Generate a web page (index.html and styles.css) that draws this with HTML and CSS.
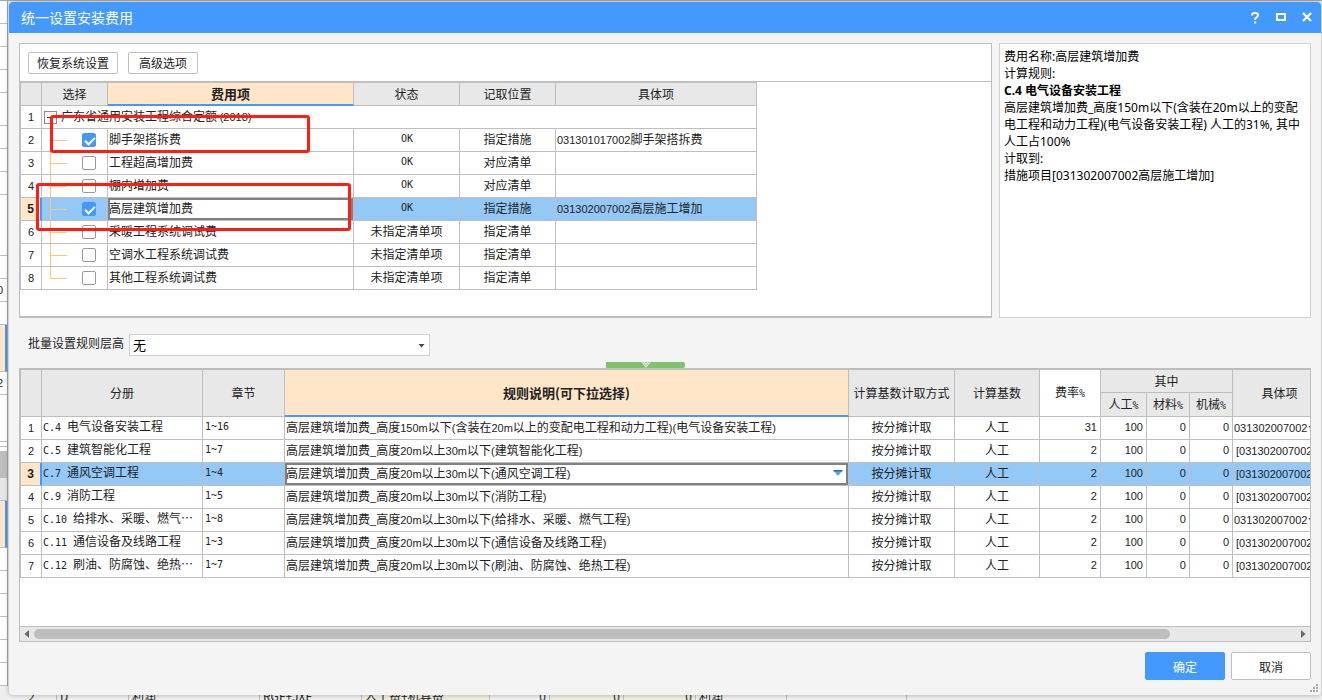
FILE: index.html
```html
<!DOCTYPE html>
<html lang="zh-CN">
<head>
<meta charset="utf-8">
<title>统一设置安装费用</title>
<link rel="stylesheet" href="styles.css">
</head>
<body>
<div class="backdrop" aria-hidden="true">
  <div class="rail">
    <i class="r24"></i><i class="r23"></i><i class="r23"></i><i class="r23"></i><i class="r33"></i><i class="r23"></i><i class="r23"></i><i class="r23"></i><i class="r61"></i><i class="r23"></i>
    <i class="r23">0</i><i class="r23">.</i><i class="r47 peach"></i><i class="r23">2</i><i class="r47"></i><i class="r5"></i><i class="r5"></i><i class="thumb"></i><i class="track"></i><i class="r47 peach"></i>
    <i class="r23"></i><i class="r23"></i><i class="r23"></i><i class="r23"></i><i class="r23"></i><i class="r23"></i>
  </div>
  <div class="under">
    <span class="u50 mid">2</span><span class="u72">D</span><span class="u131">利润</span><span class="u102">RGF+JXF</span><span class="u128 yellow">人工费+机具费</span><span class="u60 right">0</span><span class="u74 yellow right">0</span><span class="u72 yellow right">0</span><span class="u91">利润</span><span class="u120"></span>
  </div>
</div>

<main class="dialog">
  <header class="titlebar">
    <h1>统一设置安装费用</h1>
    <button type="button" aria-label="帮助"><svg width="10" height="12" viewBox="0 0 10 12"><path d="M2 3.600V2.800Q2 1 5 1t3 2.200q0 1.300-1.600 2.200Q5 6.200 5 8" fill="none" stroke="#fff" stroke-width="2"/><path d="M4 9.500h2.200v2H4z" fill="#fff"/></svg></button>
    <button type="button" aria-label="最大化"><svg width="10" height="12" viewBox="0 0 10 12"><path d="M1 2h8v6H1z" fill="none" stroke="#fff" stroke-width="2"/></svg></button>
    <button type="button" aria-label="关闭"><svg width="10" height="12" viewBox="0 0 10 12"><path d="M1 1l8 8M9 1l-8 8" stroke="#fff" stroke-width="2.200"/></svg></button>
  </header>

  <div class="content">
    <div class="upper">
      <section class="panel fees">
        <div class="toolbar">
          <button type="button" class="btn small wide">恢复系统设置</button>
          <button type="button" class="btn small">高级选项</button>
        </div>
        <div class="fee-wrap">
          <table class="grid fee-table">
            <colgroup><col class="w21"><col class="w66"><col class="w246"><col class="w106"><col class="w96"><col class="w201"></colgroup>
            <thead><tr><th></th><th>选择</th><th class="active">费用项</th><th>状态</th><th>记取位置</th><th>具体项</th></tr></thead>
            <tbody>
              <tr><th class="n">1</th><td colspan="5" class="group"><button type="button" class="fold" aria-label="折叠"></button>广东省通用安装工程综合定额 <span class="n">(2018)</span></td></tr>
              <tr><th class="n">2</th><td class="tree"><input type="checkbox" checked aria-label="脚手架搭拆费"></td><td>脚手架搭拆费</td><td class="c m">OK</td><td class="c">指定措施</td><td><span class="n">031301017002</span>脚手架搭拆费</td></tr>
              <tr><th class="n">3</th><td class="tree"><input type="checkbox" aria-label="工程超高增加费"></td><td>工程超高增加费</td><td class="c m">OK</td><td class="c">对应清单</td><td></td></tr>
              <tr><th class="n">4</th><td class="tree"><input type="checkbox" aria-label="棚内增加费"></td><td>棚内增加费</td><td class="c m">OK</td><td class="c">对应清单</td><td></td></tr>
              <tr class="sel"><th class="n">5</th><td class="tree"><input type="checkbox" checked aria-label="高层建筑增加费"></td><td class="focus">高层建筑增加费</td><td class="c m">OK</td><td class="c">指定措施</td><td><span class="n">031302007002</span>高层施工增加</td></tr>
              <tr><th class="n">6</th><td class="tree"><input type="checkbox" aria-label="采暖工程系统调试费"></td><td>采暖工程系统调试费</td><td class="c">未指定清单项</td><td class="c">指定清单</td><td></td></tr>
              <tr><th class="n">7</th><td class="tree"><input type="checkbox" aria-label="空调水工程系统调试费"></td><td>空调水工程系统调试费</td><td class="c">未指定清单项</td><td class="c">指定清单</td><td></td></tr>
              <tr><th class="n">8</th><td class="tree last"><input type="checkbox" aria-label="其他工程系统调试费"></td><td>其他工程系统调试费</td><td class="c">未指定清单项</td><td class="c">指定清单</td><td></td></tr>
            </tbody>
          </table>
          <div class="mark mark-a"></div>
          <div class="mark mark-b"></div>
        </div>
      </section>

      <aside class="info">
        <p>费用名称:高层建筑增加费</p>
        <p>计算规则:</p>
        <p><b>C.4 电气设备安装工程</b></p>
        <p>高层建筑增加费_高度150m以下(含装在20m以上的变配电工程和动力工程)(电气设备安装工程) 人工的31%, 其中人工占100%</p>
        <p>计取到:</p>
        <p>措施项目[031302007002高层施工增加]</p>
      </aside>
    </div>

    <div class="filter">
      <label for="height">批量设置规则层高</label>
      <div class="select">
        <select id="height"><option>无</option></select>
        <svg width="7" height="4" viewBox="0 0 7 4"><path d="M0.500 0h6L3.500 3.500z" fill="#444"/></svg>
      </div>
      <button type="button" class="handle" aria-label="收起"><svg width="10" height="6" viewBox="0 0 10 6"><path d="M1 0l4 5 4-5M3 0l2 2.500L7 0" fill="none" stroke="#d9efd2" stroke-width="1.200"/></svg></button>
    </div>

    <section class="panel rules">
      <div class="rule-wrap">
        <table class="grid rule-table">
          <colgroup><col class="w21"><col class="w161"><col class="w82"><col><col class="w106"><col class="w85"><col class="w61"><col class="w46"><col class="w43"><col class="w43"><col class="w94"></colgroup>
          <thead>
            <tr><th rowspan="2"></th><th rowspan="2">分册</th><th rowspan="2">章节</th><th rowspan="2" class="active">规则说明(可下拉选择)</th><th rowspan="2">计算基数计取方式</th><th rowspan="2">计算基数</th><th rowspan="2" class="white">费率<span class="m">%</span></th><th colspan="3">其中</th><th rowspan="2">具体项</th></tr>
            <tr class="sub"><th>人工<span class="m">%</span></th><th>材料<span class="m">%</span></th><th>机械<span class="m">%</span></th></tr>
          </thead>
          <tbody>
            <tr><th class="n">1</th><td><span class="m">C.4 </span>电气设备安装工程</td><td class="m">1~16</td><td>高层建筑增加费<span class="n">_</span>高度<span class="n">150m</span>以下<span class="n">(</span>含装在<span class="n">20m</span>以上的变配电工程和动力工程<span class="n">)(</span>电气设备安装工程<span class="n">)</span></td><td class="c">按分摊计取</td><td class="c">人工</td><td class="num">31</td><td class="num">100</td><td class="num">0</td><td class="num">0</td><td class="code"><span class="n">031302007002</span>…</td></tr>
            <tr><th class="n">2</th><td><span class="m">C.5 </span>建筑智能化工程</td><td class="m">1~7</td><td>高层建筑增加费<span class="n">_</span>高度<span class="n">20m</span>以上<span class="n">30m</span>以下<span class="n">(</span>建筑智能化工程<span class="n">)</span></td><td class="c">按分摊计取</td><td class="c">人工</td><td class="num">2</td><td class="num">100</td><td class="num">0</td><td class="num">0</td><td class="code open"><span class="n">[031302007002</span></td></tr>
            <tr class="sel"><th class="n">3</th><td><span class="m">C.7 </span>通风空调工程</td><td class="m">1~4</td><td class="focus"><div class="pick"><span>高层建筑增加费<span class="n">_</span>高度<span class="n">20m</span>以上<span class="n">30m</span>以下<span class="n">(</span>通风空调工程<span class="n">)</span></span><button type="button" aria-label="下拉"><svg width="10" height="6" viewBox="0 0 10 6"><path d="M1 1h8L5.500 5.500h-1z" fill="#62a9e0"/><path d="M0.500 0h9v1.500h-9z" fill="#2c6ba0"/></svg></button></div></td><td class="c">按分摊计取</td><td class="c">人工</td><td class="num">2</td><td class="num">100</td><td class="num">0</td><td class="num">0</td><td class="code open"><span class="n">[031302007002</span></td></tr>
            <tr><th class="n">4</th><td><span class="m">C.9 </span>消防工程</td><td class="m">1~5</td><td>高层建筑增加费<span class="n">_</span>高度<span class="n">20m</span>以上<span class="n">30m</span>以下<span class="n">(</span>消防工程<span class="n">)</span></td><td class="c">按分摊计取</td><td class="c">人工</td><td class="num">2</td><td class="num">100</td><td class="num">0</td><td class="num">0</td><td class="code open"><span class="n">[031302007002</span></td></tr>
            <tr><th class="n">5</th><td><span class="m">C.10 </span>给排水、采暖、燃气…</td><td class="m">1~8</td><td>高层建筑增加费<span class="n">_</span>高度<span class="n">20m</span>以上<span class="n">30m</span>以下<span class="n">(</span>给排水、采暖、燃气工程<span class="n">)</span></td><td class="c">按分摊计取</td><td class="c">人工</td><td class="num">2</td><td class="num">100</td><td class="num">0</td><td class="num">0</td><td class="code"><span class="n">031302007002</span>…</td></tr>
            <tr><th class="n">6</th><td><span class="m">C.11 </span>通信设备及线路工程</td><td class="m">1~3</td><td>高层建筑增加费<span class="n">_</span>高度<span class="n">20m</span>以上<span class="n">30m</span>以下<span class="n">(</span>通信设备及线路工程<span class="n">)</span></td><td class="c">按分摊计取</td><td class="c">人工</td><td class="num">2</td><td class="num">100</td><td class="num">0</td><td class="num">0</td><td class="code open"><span class="n">[031302007002</span></td></tr>
            <tr><th class="n">7</th><td><span class="m">C.12 </span>刷油、防腐蚀、绝热…</td><td class="m">1~7</td><td>高层建筑增加费<span class="n">_</span>高度<span class="n">20m</span>以上<span class="n">30m</span>以下<span class="n">(</span>刷油、防腐蚀、绝热工程<span class="n">)</span></td><td class="c">按分摊计取</td><td class="c">人工</td><td class="num">2</td><td class="num">100</td><td class="num">0</td><td class="num">0</td><td class="code open"><span class="n">[031302007002</span></td></tr>
          </tbody>
        </table>
      </div>
      <div class="scroll">
        <svg width="5" height="8" viewBox="0 0 5 8"><path d="M5 0v8L0.500 4z" fill="#666873"/></svg>
        <div class="lane"><div class="bar"></div></div>
        <svg width="5" height="8" viewBox="0 0 5 8"><path d="M0 0v8L4.500 4z" fill="#666873"/></svg>
      </div>
    </section>

    <footer class="actions">
      <button type="button" class="btn primary">确定</button>
      <button type="button" class="btn">取消</button>
    </footer>
  </div>
  <svg class="grip" width="8" height="8" viewBox="0 0 8 8"><path d="M6 0h2v2H6zM3 3h2v2H3zM6 3h2v2H6zM0 6h2v2H0zM3 6h2v2H3zM6 6h2v2H6z" fill="#a8a8a8"/></svg>
</main>
</body>
</html>
```
FILE: styles.css
```css
:root {
  --line: #bebebe;
  --blue: #4499ff;
  --cjk: "Noto Sans CJK SC", sans-serif;
  --mono: "DejaVu Sans Mono", "Noto Sans CJK SC", monospace;
  --digits: "Liberation Sans", "Noto Sans CJK SC", sans-serif;
}

* { box-sizing: border-box; }

body {
  margin: 0;
  font: 12px/17px var(--cjk);
  color: #222;
  background: #eee;
  overflow: hidden;
}

button, select, input { font: inherit; color: inherit; margin: 0; }
button { padding: 0; cursor: pointer; }
svg { display: block; }

/* application behind the dialog */
.backdrop {
  position: absolute;
  inset: 0;
  overflow: hidden;
  background: #eee;
  border-top: 1px solid #a8a8a8;
}
.rail { display: flex; flex-direction: column; width: 8px; margin-top: -1px; background: #fff; border-right: 1px solid #a3ab9c; }
.rail i {
  flex: none;
  border-bottom: 1px solid var(--line);
  font: 11px/22px var(--digits);
  text-indent: -3px;
}
.rail .r5 { height: 5px; }
.rail .r23 { height: 23px; }
.rail .r24 { height: 24px; }
.rail .r33 { height: 33px; }
.rail .r47 { height: 47px; }
.rail .r61 { height: 61px; }
.rail .thumb { height: 26px; background: var(--line); }
.rail .track { height: 23px; background: #e6e6e6; }
.rail .peach { background: #ffe6c8; border-right: 2px solid var(--blue); }
.under { position: absolute; left: 7px; bottom: 0; display: flex; height: 9px; line-height: 9px; background: #f0f0f0; }
.under span { flex: none; padding: 0 3px; border-right: 1px solid var(--line); white-space: nowrap; }
.under .mid { text-align: center; }
.under .right { text-align: right; }
.under .yellow { background: #f0f0d8; }
.u50 { width: 50px; }
.u60 { width: 60px; }
.u72 { width: 72px; }
.u74 { width: 74px; }
.u91 { width: 91px; }
.u102 { width: 102px; }
.u120 { width: 120px; }
.u128 { width: 128px; }
.u131 { width: 131px; }

/* dialog frame */
.dialog {
  position: relative;
  display: flex;
  flex-direction: column;
  min-height: calc(100vh - 7px);
  margin: 2px 1px 5px 9px;
  background: #f4f4f4;
  border-radius: 4px;
  box-shadow: 0 0 5px rgba(0, 0, 0, .3);
}
.titlebar {
  display: flex;
  align-items: center;
  height: 31px;
  padding: 0 1px 0 12px;
  color: #fff;
  background: var(--blue);
  border-radius: 4px 4px 0 0;
}
.titlebar h1 { flex: 1; margin: 0; font: 14px/31px var(--cjk); }
.titlebar button { display: flex; justify-content: center; width: 26px; border: 0; background: none; }

.content { flex: 1; display: flex; flex-direction: column; padding: 10px 10px 15px; }
.upper { display: grid; grid-template-columns: 1fr 312px; gap: 7px; }

.panel { background: #fff; border: 1px solid var(--line); }
.fees { border-bottom-width: 2px; padding-bottom: 26px; }
.toolbar { display: flex; gap: 10px; padding: 8px 8px 7px; border-bottom: 1px solid var(--line); }

.btn {
  width: 80px;
  height: 28px;
  background: #fff;
  border: 1px solid var(--line);
  border-radius: 2px;
}
.btn.small { width: 70px; height: 22px; line-height: 20px; }
.btn.wide { width: 90px; }
.btn.primary { color: #fff; background: var(--blue); border-color: var(--blue); }

.info { padding: 4px; background: #fff; border: 1px solid #d0d0d0; color: #000; font-family: "Noto Sans", var(--cjk); }
.info p { margin: 0; }

/* grids */
.grid {
  table-layout: fixed;
  border-collapse: separate;
  border-spacing: 0;
  border-left: 1px solid var(--line);
  border-top: 1px solid var(--line);
}
.grid th, .grid td {
  height: 23px;
  padding: 0 1px;
  line-height: 18px;
  border-right: 1px solid var(--line);
  border-bottom: 1px solid var(--line);
  font-weight: 400;
  text-align: left;
  white-space: nowrap;
  overflow: hidden;
}
.grid thead th { background: #e8e8e8; text-align: center; }
.grid thead .sub th { height: 24px; }
.grid thead .active { background: #ffe6c8; font-size: 13px; font-weight: 700; border-bottom: 2px solid var(--blue); }
.grid thead .white { background: #fff; }
.grid tbody th { text-align: center; }
.grid tbody td { padding-bottom: 2px; }
.grid .c { text-align: center; }
.grid .n, .grid .num { font-family: var(--digits); font-size: 11px; }
.grid .m { font-family: var(--mono); font-size: 10px; white-space: pre; }
.grid .num { text-align: right; padding-right: 3px; }
.grid td.m { padding-left: 2px; }
.grid .sel td { background-color: #93c8f7; }
.grid .sel th { background: #ffe6c8; font-weight: 700; font-size: 12px; border-right: 2px solid var(--blue); }
.grid .sel td.focus { background: #fff; box-shadow: inset 0 0 0 2px #808080; }

.fee-wrap { position: relative; }
.fee-table { width: 737px; }
.w21 { width: 21px; }
.w43 { width: 43px; }
.w46 { width: 46px; }
.w61 { width: 61px; }
.w66 { width: 66px; }
.w82 { width: 82px; }
.w85 { width: 85px; }
.w94 { width: 94px; }
.w96 { width: 96px; }
.w106 { width: 106px; }
.w161 { width: 161px; }
.w201 { width: 201px; }
.w246 { width: 246px; }

.fold {
  display: inline-block;
  width: 13px;
  height: 13px;
  margin: 0 4px 0 1px;
  vertical-align: middle;
  border: 1px solid #8c8c8c;
  background: linear-gradient(#444, #444) center / 7px 1px no-repeat #fff;
}
.grid .tree {
  padding: 0 0 0 40px;
  background-image: linear-gradient(#f9c87c, #f9c87c), linear-gradient(#f9c87c, #f9c87c);
  background-position: 8px 0, 8px 11px;
  background-size: 1px 100%, 17px 1px;
  background-repeat: no-repeat;
}
.grid .tree.last { background-size: 1px 11px, 17px 1px; }
input[type="checkbox"] {
  appearance: none;
  display: block;
  position: relative;
  width: 14px;
  height: 14px;
  border: 1px solid #999;
  border-radius: 2px;
  background: #fff;
}
input[type="checkbox"]:checked { background: var(--blue); border-color: var(--blue); }
input[type="checkbox"]:checked::after {
  content: "";
  position: absolute;
  left: 4px;
  top: 1px;
  width: 4px;
  height: 8px;
  border: solid #fff;
  border-width: 0 2px 2px 0;
  transform: rotate(45deg);
}

/* highlight frames laid over the rows */
.mark { position: absolute; border: 3px solid #ff1e14; border-radius: 3px; }
.mark-a { left: 30px; top: 33px; width: 260px; height: 38px; }
.mark-b { left: 16px; top: 101px; width: 315px; height: 48px; }

/* floor-height filter */
.filter { position: relative; display: flex; align-items: flex-start; gap: 5px; padding: 16px 0 12px 9px; }
.select { position: relative; width: 301px; }
.select select {
  appearance: none;
  display: block;
  width: 100%;
  height: 22px;
  padding: 0 3px 2px;
  font-size: 13px;
  color: #000;
  background: #fff;
  border: 1px solid #d0d0d0;
  border-radius: 0;
}
.select svg { position: absolute; right: 5px; top: 10px; }
.handle {
  position: absolute;
  left: calc(50% - 59px);
  bottom: 0;
  display: flex;
  justify-content: center;
  width: 79px;
  height: 6px;
  border: 0;
  border-radius: 0 2px 2px 0;
  background: #81c26d;
}

.rules { flex: 1; display: flex; flex-direction: column; }
.rule-wrap { flex: 1; overflow: hidden; }
.rule-table { width: calc(100% + 17px); }
.grid .code { padding-left: 1px; }
.grid .code.open { padding-left: 3px; }
.pick { display: flex; align-items: center; justify-content: space-between; padding-right: 4px; }
.pick button { border: 0; background: none; }

.scroll { display: flex; align-items: center; gap: 5px; height: 15px; padding: 0 4px; background: #e8e8e8; border-top: 1px solid var(--line); }
.lane { flex: 1; }
.bar { width: 90%; height: 10px; border-radius: 5px; background: var(--line); }

.actions { display: flex; justify-content: flex-end; gap: 6px; padding-top: 10px; }
.grip { position: absolute; right: 3px; bottom: 3px; }
```
